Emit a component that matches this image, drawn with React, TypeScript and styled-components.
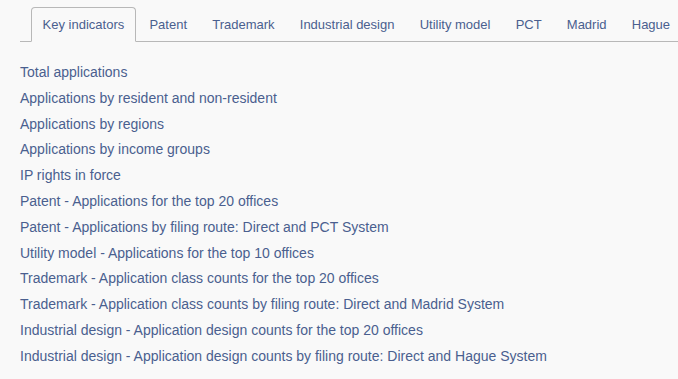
import React, { useState } from "react";
import styled, { createGlobalStyle } from "styled-components";

const GlobalStyle = createGlobalStyle`
  html, body {
    margin: 0;
    padding: 0;
    background: #f9f9f9;
  }
  body {
    font-family: "Liberation Sans", Arial, Helvetica, sans-serif;
    font-size: 13px;
    color: #4a5f8f;
  }
`;

const Page = styled.div`
  padding: 7px 0 0 20px;
`;

const TabBar = styled.ul`
  display: flex;
  list-style: none;
  margin: 0;
  padding: 0 0 0 11px;
  border-bottom: 1px solid #b8b8b8;
`;

const Tab = styled.li<{ $active?: boolean }>`
  margin: 0 2px -1px 0;
  padding: 9px 10.6px;
  line-height: 15px;
  border: 1px solid ${(p) => (p.$active ? "#b8b8b8" : "transparent")};
  border-bottom-color: ${(p) => (p.$active ? "#f9f9f9" : "transparent")};
  border-radius: 4px 4px 0 0;
  background: ${(p) => (p.$active ? "#f9f9f9" : "transparent")};
  white-space: nowrap;
  cursor: pointer;
`;

const IndicatorList = styled.ul`
  list-style: none;
  margin: 18px 0 0;
  padding: 0;
  font-size: 14px;
`;

const Indicator = styled.li`
  line-height: 25.8px;
  white-space: nowrap;
  cursor: pointer;
`;

const tabs = [
  "Key indicators",
  "Patent",
  "Trademark",
  "Industrial design",
  "Utility model",
  "PCT",
  "Madrid",
  "Hague",
];

const indicators = [
  "Total applications",
  "Applications by resident and non-resident",
  "Applications by regions",
  "Applications by income groups",
  "IP rights in force",
  "Patent - Applications for the top 20 offices",
  "Patent - Applications by filing route: Direct and PCT System",
  "Utility model - Applications for the top 10 offices",
  "Trademark - Application class counts for the top 20 offices",
  "Trademark - Application class counts by filing route: Direct and Madrid System",
  "Industrial design - Application design counts for the top 20 offices",
  "Industrial design - Application design counts by filing route: Direct and Hague System",
];

const App = (): JSX.Element => {
  const [active, setActive] = useState(0);

  return (
    <Page>
      <GlobalStyle />
      <TabBar>
        {tabs.map((t, i) => (
          <Tab key={t} $active={i === active} onClick={() => setActive(i)}>
            {t}
          </Tab>
        ))}
      </TabBar>
      <IndicatorList>
        {indicators.map((item) => (
          <Indicator key={item}>{item}</Indicator>
        ))}
      </IndicatorList>
    </Page>
  );
};

export default App;
